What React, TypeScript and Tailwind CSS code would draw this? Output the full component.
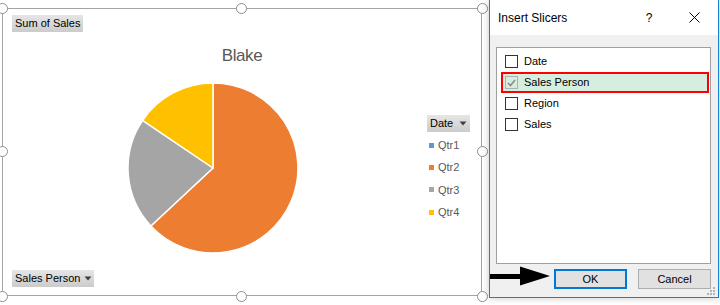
import React from 'react';

const Caret: React.FC<{ gap: string }> = ({ gap }) => (
  <svg width="8" height="5" viewBox="0 0 8 5" className={gap}>
    <path d="M0.5 0.5 L7.5 0.5 L4 4.5 Z" fill="#404040" />
  </svg>
);

const FieldButton: React.FC<{ label: string; caretGap?: string; className?: string }> = ({ label, caretGap, className }) => (
  <div
    className={`flex items-center h-[17px] px-[3px] bg-linear-to-b from-[#e6e6e6] to-[#cbcbcb] text-[11px] text-black leading-none ${className ?? ''}`}
  >
    <span>{label}</span>
    {caretGap && <Caret gap={caretGap} />}
  </div>
);

const Handle: React.FC<{ className: string }> = ({ className }) => (
  <div className={`absolute w-[11px] h-[11px] rounded-full bg-white border-[1.5px] border-[#8f8f8f] ${className}`} />
);

const legend = [
  { label: 'Qtr1', color: 'bg-[#5b9bd5]' },
  { label: 'Qtr2', color: 'bg-[#ed7d31]' },
  { label: 'Qtr3', color: 'bg-[#a5a5a5]' },
  { label: 'Qtr4', color: 'bg-[#ffc000]' },
];

const fields = [
  { label: 'Date', checked: false },
  { label: 'Sales Person', checked: true },
  { label: 'Region', checked: false },
  { label: 'Sales', checked: false },
];

const PieChart: React.FC = () => (
  <svg width="172" height="172" viewBox="0 0 172 172">
    <g stroke="#ffffff" strokeWidth="1.5" strokeLinejoin="round">
      <path d="M86 86 L86 1 A85 85 0 1 1 23.83 143.97 Z" fill="#ed7d31" />
      <path d="M86 86 L23.83 143.97 A85 85 0 0 1 15.53 38.47 Z" fill="#a5a5a5" />
      <path d="M86 86 L15.53 38.47 A85 85 0 0 1 86 1 Z" fill="#ffc000" />
    </g>
  </svg>
);

const Checkbox: React.FC<{ checked: boolean }> = ({ checked }) =>
  checked ? (
    <div className="w-[13px] h-[13px] border border-[#b0b0b0] flex items-center justify-center">
      <svg width="9" height="8" viewBox="0 0 9 8">
        <path d="M1 4 L3.5 6.5 L8 1" fill="none" stroke="#8c8c8c" strokeWidth="1.6" />
      </svg>
    </div>
  ) : (
    <div className="w-[13px] h-[13px] border border-[#333333] bg-white" />
  );

const App: React.FC = () => {
  return (
    <div className="relative flex w-[720px] h-[305px] bg-white overflow-hidden font-['Liberation_Sans',Arial,sans-serif]">
      {/* chart area */}
      <div className="w-[489px] shrink-0 pt-[8px] pl-[2px]">
        <div className="relative w-[480px] h-[288px] border border-[#a3a3a3] flex flex-col">
          <FieldButton label="Sum of Sales" className="self-start ml-[9px] mt-[6px]" />
          <div className="mt-[14px] text-center text-[17px] leading-[20px] tracking-[-0.4px] text-[#595959]">Blake</div>
          <div className="flex items-start mt-[16px]">
            <div className="ml-[124px]">
              <PieChart />
            </div>
            <div className="ml-[128px] mt-[33px] flex flex-col">
              <FieldButton label="Date" caretGap="ml-[6px]" className="self-start" />
              <div className="mt-[2px] flex flex-col pl-[2px]">
                {legend.map((l) => (
                  <div key={l.label} className="h-[22.4px] flex items-center gap-[4px] text-[11px] text-[#595959]">
                    <div className={`w-[5px] h-[5px] ${l.color}`} />
                    <span>{l.label}</span>
                  </div>
                ))}
              </div>
            </div>
          </div>
          <FieldButton label="Sales Person" caretGap="ml-[4px]" className="self-start ml-[9px] mt-auto mb-[8px] pr-[2px]" />

          <Handle className="left-[-6.5px] top-[-6.5px]" />
          <Handle className="left-[233px] top-[-6.5px]" />
          <Handle className="right-[-6.5px] top-[-6.5px]" />
          <Handle className="left-[-6.5px] top-[137px]" />
          <Handle className="right-[-6.5px] top-[137px]" />
          <Handle className="left-[-6.5px] bottom-[-6.5px]" />
          <Handle className="left-[233px] bottom-[-6.5px]" />
          <Handle className="right-[-6.5px] bottom-[-6.5px]" />
        </div>
      </div>

      {/* dialog */}
      <div className="relative w-[230px] h-[298px] flex flex-col border-x border-b border-[#1c7fd2] bg-[#f0f0f0] shadow-[0_0_7px_rgba(0,0,0,0.22)]">
        <div className="h-[35px] bg-white flex items-center pl-[8px] text-[12px] text-black">
          <span className="flex-1">Insert Slicers</span>
          <span className="w-[10px] text-center mr-[35px]">?</span>
          <svg width="11" height="11" viewBox="0 0 11 11" className="mr-[18px]">
            <path d="M0.5 0.5 L10.5 10.5 M10.5 0.5 L0.5 10.5" stroke="#000" strokeWidth="1" />
          </svg>
        </div>
        <div className="mt-[12px] ml-[6px] mr-[7px] h-[217px] border border-[#a0a0a0] bg-white pt-[3px] flex flex-col">
          {fields.map((f) => (
            <div
              key={f.label}
              className={`h-[21px] ml-[4px] mr-[1px] pl-[2px] flex items-center gap-[6px] border-[2.5px] text-[11px] text-black ${
                f.checked ? 'border-[#ff0000] bg-[#d6eee0]' : 'border-transparent'
              }`}
            >
              <Checkbox checked={f.checked} />
              <span>{f.label}</span>
            </div>
          ))}
        </div>
        <div className="mt-[5px] mr-[7px] flex justify-end gap-[11px] text-[11px] text-black">
          <div className="w-[73px] h-[20px] border-2 border-[#0078d7] bg-[#e1e1e1] flex items-center justify-center">OK</div>
          <div className="w-[73px] h-[20px] border border-[#adadad] bg-[#e1e1e1] flex items-center justify-center">Cancel</div>
        </div>
        <svg width="10" height="10" viewBox="0 0 10 10" className="absolute right-[2px] bottom-[1px]">
          <g fill="#b4b4b4">
            <rect x="7" y="1" width="2" height="2" />
            <rect x="4" y="4" width="2" height="2" />
            <rect x="7" y="4" width="2" height="2" />
            <rect x="1" y="7" width="2" height="2" />
            <rect x="4" y="7" width="2" height="2" />
            <rect x="7" y="7" width="2" height="2" />
          </g>
        </svg>
      </div>

      {/* pointer arrow */}
      <svg width="64" height="24" viewBox="0 0 64 24" className="absolute left-[488px] top-[265px]">
        <rect x="2" y="9" width="31" height="5" fill="#000" />
        <path d="M32 1.5 L62 11 L32 20.5 Z" fill="#000" />
      </svg>
    </div>
  );
};

export default App;
